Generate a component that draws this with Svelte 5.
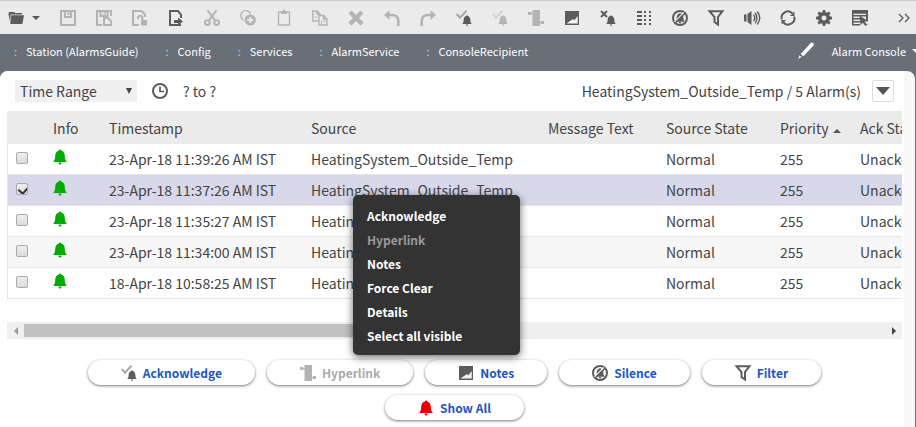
<script>
  const tools = [
    { icon: 'save', label: 'Save', off: true },
    { icon: 'saveBog', label: 'Save Bog', off: true },
    { icon: 'unlock', label: 'Lock', off: true },
    { icon: 'export', label: 'Export' },
    { icon: 'cut', label: 'Cut', off: true },
    { icon: 'duplicate', label: 'Duplicate', off: true },
    { icon: 'paste', label: 'Paste', off: true },
    { icon: 'copy', label: 'Copy', off: true },
    { icon: 'delete', label: 'Delete', off: true },
    { icon: 'undo', label: 'Undo', off: true },
    { icon: 'redo', label: 'Redo', off: true },
    { icon: 'ack', label: 'Acknowledge' },
    { icon: 'ack', label: 'Acknowledge recent', off: true },
    { icon: 'link', label: 'Hyperlink', off: true },
    { icon: 'notes', label: 'Notes' },
    { icon: 'clear', label: 'Force Clear' },
    { icon: 'details', label: 'Details' },
    { icon: 'silence', label: 'Silence' },
    { icon: 'filter', label: 'Filter' },
    { icon: 'sound', label: 'Sound' },
    { icon: 'refresh', label: 'Refresh' },
    { icon: 'gear', label: 'Settings' },
    { icon: 'select', label: 'Select' }
  ];
  const crumbs = ['Station (AlarmsGuide)', 'Config', 'Services', 'AlarmService', 'ConsoleRecipient'];
  let rows = $state([
    { time: '23-Apr-18 11:39:26 AM IST', checked: false },
    { time: '23-Apr-18 11:37:26 AM IST', checked: true },
    { time: '23-Apr-18 11:35:27 AM IST', checked: false },
    { time: '23-Apr-18 11:34:00 AM IST', checked: false },
    { time: '18-Apr-18 10:58:25 AM IST', checked: false }
  ]);
  const menu = ['Acknowledge', 'Hyperlink', 'Notes', 'Force Clear', 'Details', 'Select all visible'];
  const actions = [
    { icon: 'ack', label: 'Acknowledge' },
    { icon: 'link', label: 'Hyperlink', off: true },
    { icon: 'notes', label: 'Notes' },
    { icon: 'silence', label: 'Silence' },
    { icon: 'filter', label: 'Filter' },
    { icon: 'bell', label: 'Show All', red: true }
  ];
  const teeth = [0, 45, 90, 135, 180, 225, 270, 315];
  const bell =
    'M8 .5c.7 0 1 .4 1.200 1C11.700 2.200 12.700 4.300 12.800 7c.1 2.500.3 3.800 1.700 5.200V13h-13v-.8C2.900 10.800 3.100 9.500 3.200 7c.1-2.700 1.100-4.800 3.600-5.500C7 .9 7.300.5 8 .5zM6.600 13.500h2.800v1L8.700 15.500H7.300l-.7-1z';
</script>

{#snippet icon(name)}
  <svg class="icon" viewBox="0 0 16 16" width="16" height="16" aria-hidden="true">
    {#if name === 'folder'}
      <path class="fill" d="M1 2h5l1 1h7v1.400H2.600L2 11 .4 4zM3.200 5.200H16L14.400 14H2.200z" />
    {:else if name === 'save'}
      <path class="line" d="M1 1h14v14H1zM5 1v6h6V1M8.500 1v4" />
    {:else if name === 'saveBog'}
      <path class="line" d="M6 15H1V1h14v5M4.500 1v5h7V1M8.500 1v3.500M8 8h4l3 3v4H8z" />
    {:else if name === 'unlock'}
      <path class="line" d="M7 15H1V1h8.500L13 4.500V7M6 9V8a2.200 2.200 0 0 1 4.400 0v2" />
      <path class="fill" d="M9 10h6v5.500H9z" />
    {:else if name === 'export'}
      <path class="line" d="M13 8V4.500L10 1H2v14h11" />
      <path class="fill" d="M6 10h4V7.500l5 4-5 4V13H6z" />
    {:else if name === 'cut'}
      <path class="line" d="M3.500.3 11.500 11M12.500.3 4.500 11" />
      <circle class="line" cx="3.300" cy="12.600" r="2.400" /><circle class="line" cx="12.700" cy="12.600" r="2.400" />
    {:else if name === 'duplicate'}
      <path class="thin" d="M4 10.300A5 5 0 1 1 10.500 4" />
      <circle class="fill" cx="10.300" cy="10" r="5.600" />
      <path class="plus" d="M7.300 10h6M10.300 7v6" />
    {:else if name === 'paste'}
      <path class="thin" d="M5 2H2.500v13h11V2H11" />
      <path class="fill" d="M5 1h1.500a1.500 1.500 0 0 1 3 0H11v3H5z" />
    {:else if name === 'copy'}
      <path class="thin" d="M6 11H.800V1H5l3 3v2M5 1v3h3M7 5.500h4.500l3.500 3.500v6H7zM11.500 5.500V9H15M9 11.500h1.500M12 11.500h1.500M9 13.500h1M3 7h1.500" />
    {:else if name === 'delete'}
      <path class="fat" d="m2 2 12 12M14 2 2 14" />
    {:else if name === 'undo'}
      <path class="bend" d="M3 5h5.500a5.800 5.800 0 0 1 5.800 5.800V16" />
      <path class="fill" d="M0 5 5.500.300v9.400z" />
    {:else if name === 'redo'}
      <path class="bend" d="M13 5H7.500a5.800 5.800 0 0 0-5.800 5.800V16" />
      <path class="fill" d="M16 5 10.500.300v9.400z" />
    {:else if name === 'ack'}
      <path class="tick" d="m.800 4 3.200 3.700L10.500.800" />
      <path class="fill" d={bell} transform="translate(5.400 5) scale(.7)" />
    {:else if name === 'clear'}
      <path class="line" d="m1 1 6 6M7 1 1 7" />
      <path class="fill" d={bell} transform="translate(5.400 5) scale(.7)" />
    {:else if name === 'link'}
      <path class="fill" d="M4.500 0h7.500v16H4.500zM0 2h3v3H0zM13 11h3v3h-3z" />
      <path class="thin" d="M2 3.500h4M11 12.500h4" />
    {:else if name === 'notes'}
      <path class="fill" d="M1 1h14v14H1z" />
      <path class="blank" d="M2.500 13.500 9 9l1.200 1.500L13.700 6v7.500z" />
    {:else if name === 'details'}
      <path class="fill" d="M1 1h5v2H1zM1 5h5v2H1zM1 9h5v2H1zM1 13h5v2H1zM8 1h2v2H8zM8 5h2v2H8zM8 9h2v2H8zM8 13h2v2H8zM13 1h2v2h-2zM13 5h2v2h-2zM13 9h2v2h-2zM13 13h2v2h-2z" />
    {:else if name === 'silence'}
      <circle class="line" cx="8" cy="8" r="7" />
      <path class="fill" d={bell} transform="translate(2.400 2.600) scale(.7)" />
      <path class="cutout" d="m2.500 11.800 9.500-9.500" /><path class="thin" d="m3 13.300 10.500-10.500" />
    {:else if name === 'filter'}
      <path class="line" d="M1.500 1.200h13L10 7v7.500L6.500 12V7z" />
    {:else if name === 'sound'}
      <path class="fill" d="M0 4.500h2.500v7H0zM3.500 4 7.500 1v14l-4-3z" />
      <path class="thin" d="M9.500 5a4.500 4.500 0 0 1 0 6M11 2.700c2.500 3 2.500 7.600 0 10.600M13.300 1.500c3 4 3 9 0 13" />
    {:else if name === 'refresh'}
      <path class="line" d="M1.800 9.500A6.300 6.300 0 0 1 12.500 3.500M14.200 6.500A6.300 6.300 0 0 1 3.500 12.500" />
      <path class="fill" d="M14.500 1.500v4.500H10zM1.500 14.500V10H6z" />
    {:else if name === 'gear'}
      <circle class="ring" cx="8" cy="8" r="4.300" />
      {#each teeth as angle (angle)}
        <path class="fill" d="M6.300 3 6.800 0h2.400l.5 3z" transform={`rotate(${angle} 8 8)`} />
      {/each}
    {:else if name === 'select'}
      <path class="fill" d="M0 0h16v12l-2-2V3.800H1.500V5H14v1.500H1.500V8H8v1.500H1.500V11H8v1.500H1.500V14H8v1.500H0z" />
      <path class="fill" d="M7.500 5.500 15.800 11l-3.200.8 2.900 3-2 1.200-2.700-3.200L8.500 15z" />
    {:else if name === 'bell'}
      <path class="fill" d={bell} />
    {:else if name === 'pencil'}
      <path class="fill" d="M12.500.3a1.600 1.600 0 0 1 3 2.300L5.500 13.300 2.700 11zM1.500 12.300l2 1.800L.3 16z" />
    {:else if name === 'clock'}
      <circle class="line" cx="8" cy="8" r="7" /><path class="hand" d="M8 3.500v5h4" />
    {/if}
  </svg>
{/snippet}

<div class="app">
  <header class="toolbar">
    <button class="tool open" aria-label="Open">{@render icon('folder')}<span class="caret"></span></button>
    {#each tools as tool, i (i)}
      <button class="tool" class:off={tool.off} disabled={tool.off} aria-label={tool.label}>{@render icon(tool.icon)}</button>
    {/each}
    <button class="tool more" aria-label="More tools">
      <svg viewBox="0 0 12 10" width="12" height="10" aria-hidden="true"><path class="chevrons" d="m1 1 4 4-4 4M7 1l4 4-4 4" /></svg>
    </button>
  </header>

  <nav class="path" aria-label="Path">
    <div class="crumbs">
      {#each crumbs as crumb (crumb)}
        <span class="crumb"><span class="dots">:</span><a href="#top">{crumb}</a></span>
      {/each}
    </div>
    <button class="view"><span class="pencil">{@render icon('pencil')}</span>Alarm Console<span class="caret"></span></button>
  </nav>

  <main>
    <div class="page">
      <div class="range">
        <div class="picker">
          <select aria-label="Time Range"><option>Time Range</option></select>
          <span class="caret"></span>
        </div>
        <span class="clock">{@render icon('clock')}</span>
        <span>? to ?</span>
        <span class="summary">HeatingSystem_Outside_Temp / 5 Alarm(s)</span>
        <button class="expand" aria-label="Table menu"><span class="caret"></span></button>
      </div>

      <div class="scroller">
        <table>
          <colgroup>
            <col class="c-check" /><col class="c-info" /><col class="c-time" /><col class="c-source" />
            <col class="c-text" /><col class="c-state" /><col class="c-priority" /><col class="c-ack" />
          </colgroup>
          <thead>
            <tr>
              <th aria-label="Selected"></th><th>Info</th><th>Timestamp</th><th>Source</th><th>Message Text</th>
              <th>Source State</th><th>Priority<span class="sort"></span></th><th>Ack State</th>
            </tr>
          </thead>
          <tbody>
            {#each rows as row (row.time)}
              <tr class:selected={row.checked}>
                <td class="check"><input type="checkbox" bind:checked={row.checked} aria-label={row.time} /></td>
                <td class="info">{@render icon('bell')}</td>
                <td>{row.time}</td>
                <td>HeatingSystem_Outside_Temp</td>
                <td></td>
                <td>Normal</td>
                <td>255</td>
                <td>Unacked</td>
              </tr>
            {/each}
          </tbody>
        </table>
      </div>

      <div class="scrollbar">
        <button aria-label="Scroll left"><span class="left"></span></button>
        <div class="track"><div class="thumb"></div></div>
        <button aria-label="Scroll right"><span class="right"></span></button>
      </div>

      <div class="actions">
        {#each actions as action (action.label)}
          <button class="action" class:off={action.off} class:red={action.red} disabled={action.off}>
            {@render icon(action.icon)}{action.label}
          </button>
        {/each}
      </div>
    </div>
  </main>

  <div class="menu" role="menu">
    {#each menu as item (item)}
      <button role="menuitem" disabled={item === 'Hyperlink'}>{item}</button>
    {/each}
  </div>
</div>

<style>
  :global(body) { background: #696f79; }
  .app {
    position: relative;
    display: flex;
    flex-direction: column;
    min-height: 100vh;
    overflow: hidden;
    color: #444;
    font-family: "Noto Sans CJK SC", "Noto Sans", sans-serif;
    font-size: 14px;
    line-height: 20px;
  }
  .app * { box-sizing: border-box; }
  button {
    padding: 0;
    border: 0;
    background: none;
    color: inherit;
    font: inherit;
    white-space: nowrap;
  }
  svg { display: block; flex: none; overflow: visible; }
  .icon { color: #5c5c5c; }
  .fill { fill: currentColor; }
  .line, .thin, .fat, .ring, .tick, .hand, .bend { fill: none; stroke: currentColor; stroke-width: 2; }
  .thin { stroke-width: 1.4; }
  .hand { stroke-width: 1.7; }
  .bend { stroke-width: 2.6; }
  .fat { stroke-width: 4.4; }
  .ring { stroke-width: 3.6; }
  .tick { stroke: #aaa; stroke-width: 2.2; }
  .cutout, .plus { fill: none; stroke: #ebebeb; stroke-width: 1.2; }
  .plus { stroke-width: 2; }
  .blank { fill: #f4f4f4; }
  .off .icon { color: #b4b4b4; }
  .off .tick { stroke: #d2d2d2; }
  .caret {
    flex: none;
    border: 4px solid transparent;
    border-top-color: currentColor;
    border-bottom: 0;
  }

  .toolbar {
    display: flex;
    align-items: center;
    height: 34px;
    padding-left: 8px;
    border-top: 1px solid #ccc;
    background: #ebebeb;
    overflow: hidden;
  }
  .tool {
    display: flex;
    flex: none;
    justify-content: center;
    width: 36px;
  }
  .open { align-items: center; justify-content: flex-start; gap: 8px; width: 42px; color: #555; }
  .more { margin-left: auto; width: 24px; }
  .chevrons { fill: none; stroke: #555; stroke-width: 1.2; }

  .path {
    display: flex;
    align-items: center;
    justify-content: space-between;
    height: 37px;
    padding: 0 0 3px 14px;
    background: #696f79;
    color: #fff;
    font-size: 11px;
    overflow: hidden;
  }
  .crumbs { display: flex; gap: 27px; }
  .crumb { display: flex; gap: 9px; white-space: nowrap; }
  .dots { color: #c4c8cc; }
  .crumb a { color: inherit; text-decoration: none; }
  .view { display: flex; flex: none; align-items: center; gap: 6px; margin-right: -4px; }
  .view .icon { color: #fff; }
  .pencil { margin-right: 12px; }

  main {
    flex: 1;
    margin-right: 1px;
    padding-right: 11px;
    border-radius: 8px 8px 0 0;
    background: #f8f8f8;
    overflow: hidden;
  }
  .page { min-height: 100%; padding: 8px 2px 12px 7px; background: #fff; }
  .range { display: flex; align-items: center; height: 24px; padding: 0 8px; white-space: nowrap; }
  .picker { display: flex; align-items: center; width: 122px; background: #f0f0f0; }
  .picker select {
    flex: 1;
    height: 22px;
    padding: 0 5px;
    border: 0;
    appearance: none;
    background: none;
    color: inherit;
    font: inherit;
  }
  .picker .caret { margin-right: 5px; border-width: 6px 3px 0; }
  .clock { margin: 0 15px; }
  .summary { margin-left: auto; }
  .expand {
    display: flex;
    align-items: center;
    justify-content: center;
    width: 22px;
    height: 22px;
    margin-left: 11px;
    border: 1px solid #ddd;
    border-radius: 2px;
    color: #555;
  }
  .expand .caret { border-width: 8px 7px 0; }

  .scroller { margin-top: 8px; overflow: hidden; }
  table { width: 960px; border-collapse: separate; border-spacing: 0; table-layout: fixed; }
  .c-check { width: 31px; }
  .c-info { width: 56px; }
  .c-time { width: 202px; }
  .c-source { width: 237px; }
  .c-text { width: 118px; }
  .c-state { width: 114px; }
  .c-priority { width: 80px; }
  th, td { padding: 0 0 0 15px; font-weight: normal; text-align: left; white-space: nowrap; }
  th { height: 33px; background: #ebebeb; }
  td { height: 31px; border-bottom: 1px solid #e6e6e6; }
  tbody tr:nth-child(even) { background: #f7f7f7; }
  tbody tr.selected { background: #d8d8ea; }
  td.check { padding-left: 8px; border-left: 1px solid #e6e6e6; }
  .info .icon { color: #00ac00; }
  td.info { padding: 0 0 4px 14px; }
  .sort {
    display: inline-block;
    margin-left: 5px;
    border: 4px solid transparent;
    border-top: 0;
    border-bottom-color: #555;
    vertical-align: 1px;
  }
  input {
    display: block;
    width: 12px;
    height: 12px;
    margin: 0 0 3px;
    border: 1px solid #aaa;
    border-radius: 2px;
    appearance: none;
    background: linear-gradient(#eee, #dcdcdc);
    overflow: hidden;
  }
  input:checked::after {
    content: "";
    display: block;
    width: 5px;
    height: 8px;
    margin-left: 3px;
    border: solid #333;
    border-width: 0 2px 2px 0;
    rotate: 40deg;
  }

  .scrollbar { display: flex; height: 17px; margin-top: 23px; background: #f0f0f0; }
  .scrollbar button { display: flex; flex: none; align-items: center; justify-content: center; width: 17px; }
  .left { border: 4px solid transparent; border-left: 0; border-right-color: #999; }
  .right { border: 4px solid transparent; border-right: 0; border-left-color: #444; }
  .track { flex: 1; padding: 2px 0; }
  .thumb { width: 55%; height: 100%; background: #c1c1c1; }

  .actions { display: flex; flex-wrap: wrap; justify-content: center; gap: 10px 12px; margin-top: 21px; padding: 0 60px; }
  .action {
    display: flex;
    align-items: center;
    gap: 6px;
    height: 25px;
    padding: 0 33px;
    border-radius: 13px;
    background: #fff;
    box-shadow: 0 1px 3px #777;
    color: #1e56c0;
    font-size: 12px;
    font-weight: bold;
  }
  .action.off { color: #aaa; }
  .action .cutout { stroke: #fff; }
  .red .icon { color: #e60000; }

  .menu {
    position: absolute;
    top: 195px;
    left: 353px;
    display: flex;
    flex-direction: column;
    width: 167px;
    padding: 9px 14px 7px;
    border-radius: 5px;
    background: #333;
    box-shadow: 0 2px 8px #0009;
    color: #fff;
    font-size: 12px;
    font-weight: bold;
  }
  .menu button { height: 24px; text-align: left; }
  .menu button:disabled { color: #999; }
</style>
